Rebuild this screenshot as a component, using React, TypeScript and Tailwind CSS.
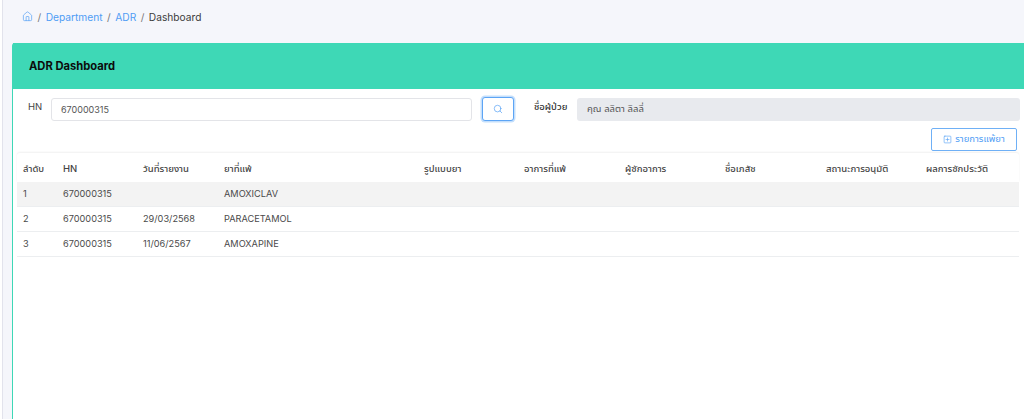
import React from "react";
import { Home, Search, SquarePlus } from "lucide-react";

const columns = ["ลำดับ", "HN", "วันที่รายงาน", "ยาที่แพ้", "รูปแบบยา", "อาการที่แพ้", "ผู้ซักอาการ", "ชื่อเภสัช", "สถานะการอนุมัติ", "ผลการซักประวัติ"];

const rows = [
  { no: "1", hn: "670000315", date: "", drug: "AMOXICLAV" },
  { no: "2", hn: "670000315", date: "29/03/2568", drug: "PARACETAMOL" },
  { no: "3", hn: "670000315", date: "11/06/2567", drug: "AMOXAPINE" },
];

const gridCols = "grid grid-cols-[40px_80px_81px_200px_100px_101px_100px_101px_100px_1fr]";

const App = () => {
  return (
    <div className="flex h-[419px] w-[1024px] overflow-hidden bg-[#f5f6fb] font-['Inter','Noto_Sans','Noto_Sans_Thai',sans-serif] text-[9.5px] text-[#4a4a4a]">
      <div className="w-[3px] shrink-0 border-r border-[#e2e3ec] bg-white" />
      <main className="flex min-w-0 flex-1 flex-col pl-[9px]">
        <nav className="flex h-[43px] items-start gap-[4.5px] pl-[10px] pt-[11px] text-[10.2px] leading-[12px]">
          <Home className="h-[11px] w-[11px] text-[#5da5f5]" strokeWidth={1.6} />
          <span className="text-[#777]">/</span>
          <a className="text-[#4f9df5]">Department</a>
          <span className="text-[#777]">/</span>
          <a className="text-[#4f9df5]">ADR</a>
          <span className="text-[#777]">/</span>
          <span className="text-[#3c3c3c]">Dashboard</span>
        </nav>

        <section className="w-[1020px] flex-1 rounded-t-[3px] border-l border-[#3ed8b6] bg-white">
          <header className="flex h-[46px] items-center bg-[#3ed8b6] pl-4 text-[11.2px] font-bold text-[#0c0c0c]">
            ADR Dashboard
          </header>

          <div className="flex h-[39px] items-center pl-[15px] pt-[1px]">
            <label className="mb-[4px] w-[23px] text-[#444]">HN</label>
            <input
              readOnly
              value="670000315"
              className="h-[23px] w-[421px] rounded-[3px] border border-[#e3e4e8] bg-white pl-[9px] text-[9px] text-[#555] outline-none"
            />
            <button className="ml-[10px] flex h-[24px] w-[32px] items-center justify-center rounded-[3px] border border-[#5da5f5] bg-white shadow-[0_0_0_1.5px_#c4dffc]">
              <Search className="h-[10px] w-[10px] text-[#4f9df5]" strokeWidth={1.6} />
            </button>
            <label className="mb-[4px] ml-[20px] w-[43px] font-medium text-[#333]">ชื่อผู้ป่วย</label>
            <div className="flex h-[23px] w-[443px] items-center rounded-[3px] bg-[#e8eaee] pl-[10px] text-[#555]">
              คุณ ลลิตา ลิลลี่
            </div>
          </div>

          <div className="mr-[15px] flex h-[25px] justify-end">
            <button className="flex h-[23px] w-[86px] items-center justify-center gap-[3px] rounded-[2px] border border-[#6fb0f6] bg-white text-[#4f9df5]">
              <SquarePlus className="h-[9px] w-[9px]" strokeWidth={1.6} />
              รายการแพ้ยา
            </button>
          </div>

          <div className="ml-[4px] w-[1002px]">
            <div className={`${gridCols} h-[29px] items-center rounded-t-[3px] bg-white pt-[3px] shadow-[0_-1px_2px_#f0f0f0]`}>
              {columns.map((c) => (
                <div key={c} className="pl-[6px] font-medium text-[#444]">
                  {c}
                </div>
              ))}
            </div>
            {rows.map((r, i) => (
              <div
                key={r.no}
                className={`${gridCols} h-[25px] items-center border-b border-[#eceef0] text-[9.2px] ${i === 0 ? "bg-[#f3f3f3]" : "bg-white"}`}
              >
                <div className="pl-[6px]">{r.no}</div>
                <div className="pl-[6px]">{r.hn}</div>
                <div className="pl-[6px]">{r.date}</div>
                <div className="pl-[6px]">{r.drug}</div>
              </div>
            ))}
          </div>
        </section>
      </main>
    </div>
  );
};

export default App;
